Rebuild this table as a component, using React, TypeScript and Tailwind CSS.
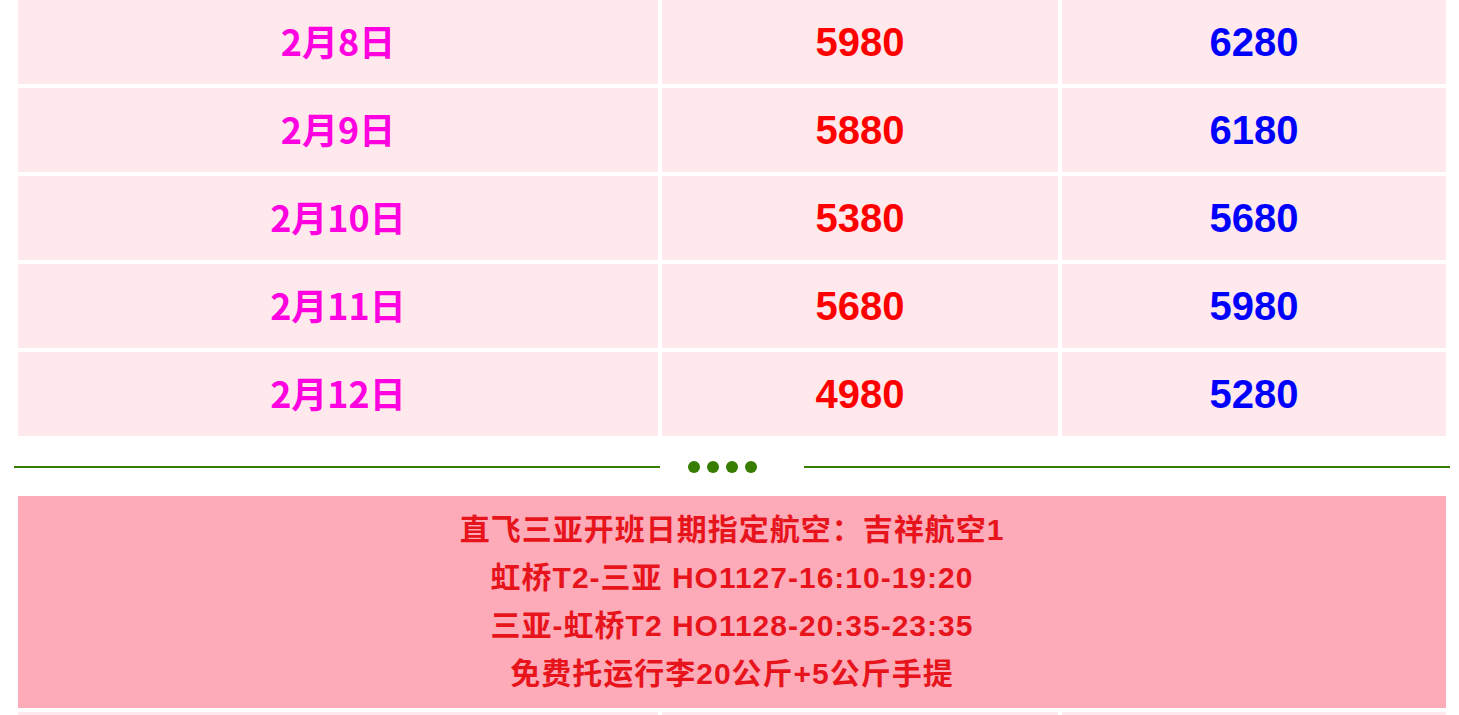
import React from 'react';

const ROWS = [
  { date: '2月8日', adult: '5980', child: '6280' },
  { date: '2月9日', adult: '5880', child: '6180' },
  { date: '2月10日', adult: '5380', child: '5680' },
  { date: '2月11日', adult: '5680', child: '5980' },
  { date: '2月12日', adult: '4980', child: '5280' },
];

const NOTES = [
  '直飞三亚开班日期指定航空：吉祥航空1',
  '虹桥T2-三亚 HO1127-16:10-19:20',
  '三亚-虹桥T2 HO1128-20:35-23:35',
  '免费托运行李20公斤+5公斤手提',
];

function PriceRow({ date, adult, child }: { date: string; adult: string; child: string }) {
  return (
    <>
      <div className="h-[84px] pb-[4px] flex items-center justify-center bg-[#ffe9ec] text-[36px] font-bold text-[#ff00e0] font-['Noto_Sans_CJK_SC',sans-serif]">
        {date}
      </div>
      <div className="h-[84px] flex items-center justify-center bg-[#ffe9ec] text-[40px] font-bold text-[#ff0000]">
        {adult}
      </div>
      <div className="h-[84px] flex items-center justify-center bg-[#ffe9ec] text-[40px] font-bold text-[#0000ff]">
        {child}
      </div>
    </>
  );
}

export default function App() {
  return (
    <div className="w-[1459px] h-[715px] overflow-hidden bg-white font-['Liberation_Sans','Noto_Sans_CJK_SC',sans-serif]">
      <div className="ml-[14px] w-[1436px]">
        {/* ── price table ─────────────────────────────────────────── */}
        <div className="px-[4px] pb-[4px] grid grid-cols-[640px_396px_384px] gap-[4px]">
          {ROWS.map(r => (
            <PriceRow key={r.date} {...r} />
          ))}
        </div>

        {/* ── divider ─────────────────────────────────────────────── */}
        <div className="h-[54px] flex items-center">
          <div className="flex-1 h-[2px] bg-[#367d00]" />
          <div className="w-[144px] flex items-center gap-[7px] pl-[28px]">
            {[0, 1, 2, 3].map(i => (
              <span key={i} className="w-[12px] h-[12px] rounded-full bg-[#367d00]" />
            ))}
          </div>
          <div className="flex-1 h-[2px] bg-[#367d00]" />
        </div>

        {/* ── flight notes ────────────────────────────────────────── */}
        <div className="pt-[2px] px-[4px] flex flex-col gap-[4px]">
          <div className="bg-[#fdabb9] py-[10px] flex flex-col items-center text-[30px] leading-[48px] font-bold text-[#e8141c] tracking-[1px]">
            {NOTES.map(n => (
              <div key={n}>{n}</div>
            ))}
          </div>
          <div className="grid grid-cols-[640px_396px_384px] gap-[4px]">
            <div className="h-[84px] bg-[#ffe9ec]" />
            <div className="h-[84px] bg-[#ffe9ec]" />
            <div className="h-[84px] bg-[#ffe9ec]" />
          </div>
        </div>
      </div>
    </div>
  );
}
